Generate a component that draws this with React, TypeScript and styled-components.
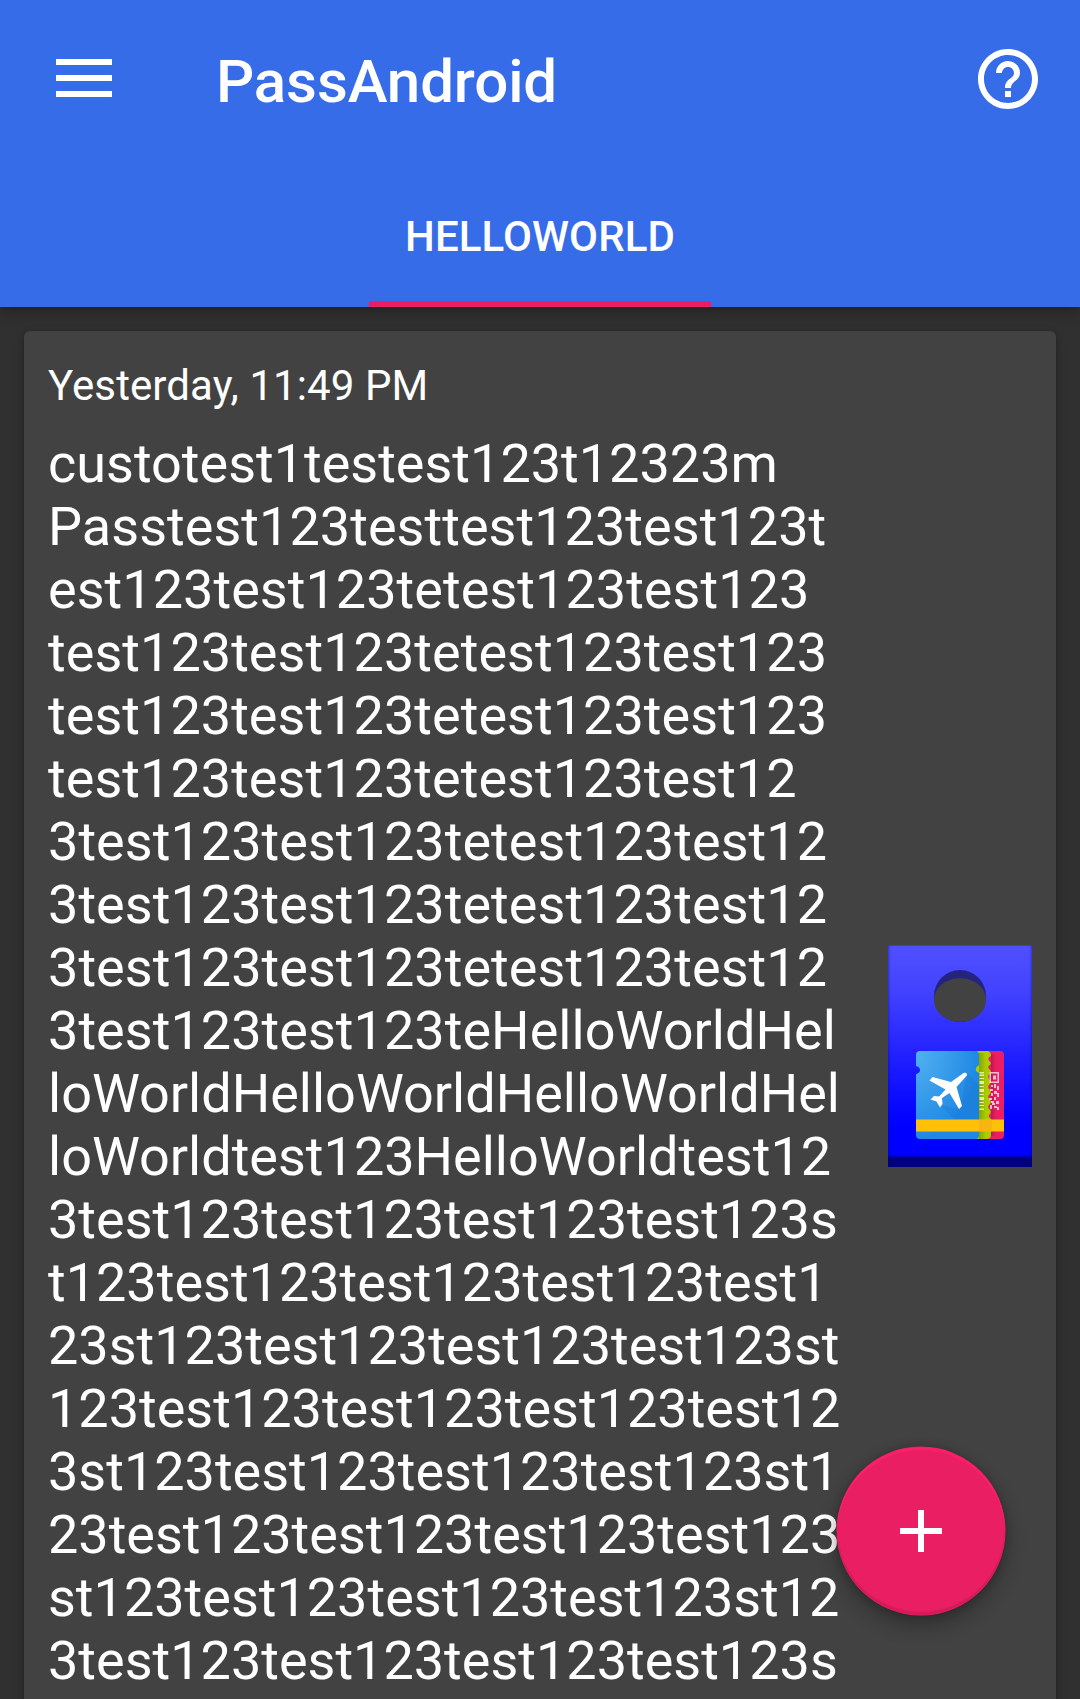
import React from "react";
import styled, { createGlobalStyle } from "styled-components";

const GlobalStyle = createGlobalStyle`
  * { box-sizing: border-box; }
  html, body { margin: 0; background: #303030; }
  body {
    font-family: Roboto, "Noto Sans", sans-serif;
    color: #fff;
    overflow: hidden;
  }
`;

const Screen = styled.div`
  width: 1080px;
  height: 1699px;
  overflow: hidden;
  display: flex;
  flex-direction: column;
  background: #303030;
`;

const AppBar = styled.header`
  flex: none;
  height: 307px;
  background: #366ce8;
  display: flex;
  flex-direction: column;
  z-index: 1;
  box-shadow: 0 4px 14px rgba(0, 0, 0, 0.3), 0 0 3px rgba(0, 0, 0, 0.25);
`;

const Toolbar = styled.div`
  height: 157px;
  padding: 0 36px 0 48px;
  display: flex;
  align-items: center;
`;

const IconButton = styled.button`
  width: 72px;
  height: 72px;
  padding: 0;
  border: 0;
  background: none;
  color: #fff;
  display: flex;
`;

const AppTitle = styled.h1`
  flex: 1;
  margin: 6px 0 0 96px;
  font-size: 60px;
  line-height: 71px;
  font-weight: 500;
  letter-spacing: -0.1px;
`;

const Tabs = styled.nav`
  flex: 1;
  display: flex;
  justify-content: center;
`;

const Tab = styled.div`
  width: 342px;
  padding-top: 15px;
  border-bottom: 6px solid #e91e63;
  display: flex;
  align-items: center;
  justify-content: center;
  font-size: 42px;
  line-height: 50px;
  font-weight: 500;
  letter-spacing: 0.1px;
`;

const Card = styled.article`
  flex: none;
  height: 1500px;
  margin: 24px 24px 0;
  padding: 24px;
  border-radius: 6px;
  background: #424242;
  box-shadow: 0 3px 8px rgba(0, 0, 0, 0.3), 0 0 2px rgba(0, 0, 0, 0.15);
  display: flex;
  justify-content: space-between;
`;

const Details = styled.div`
  width: 800px;
`;

const PassDate = styled.div`
  height: 64px;
  margin-top: 6px;
  font-size: 42px;
  line-height: 50px;
  letter-spacing: 0.1px;
`;

const PassTitle = styled.div`
  margin-top: 7px;
  font-size: 54px;
  line-height: 63px;
  white-space: nowrap;
`;

const Line = styled.div<{ $tracking: number }>`
  height: 63px;
  letter-spacing: ${(p) => p.$tracking}px;
`;

const PassArt = styled.svg`
  flex: none;
  width: 144px;
  height: 222px;
  margin-top: 590px;
`;

const Fab = styled.button`
  position: absolute;
  left: 837px;
  top: 1447px;
  width: 168px;
  height: 168px;
  padding: 0;
  border: 0;
  border-radius: 50%;
  z-index: 2;
  color: #fff;
  background: #e91e63;
  display: flex;
  align-items: center;
  justify-content: center;
  box-shadow: inset 0 3px 1px #fc206b, inset 0 -3px 1px #d41b5a,
    0 0 0 0.5px #e91e63, 0 10px 20px rgba(0, 0, 0, 0.3),
    0 0 8px rgba(0, 0, 0, 0.2);
`;

const lines = [
  "custotest1testest123t12323m",
  "Passtest123testtest123test123t",
  "est123test123tetest123test123",
  "test123test123tetest123test123",
  "test123test123tetest123test123",
  "test123test123tetest123test12",
  "3test123test123tetest123test12",
  "3test123test123tetest123test12",
  "3test123test123tetest123test12",
  "3test123test123teHelloWorldHel",
  "loWorldHelloWorldHelloWorldHel",
  "loWorldtest123HelloWorldtest12",
  "3test123test123test123test123s",
  "t123test123test123test123test1",
  "23st123test123test123test123st",
  "123test123test123test123test12",
  "3st123test123test123test123st1",
  "23test123test123test123test123",
  "st123test123test123test123st12",
  "3test123test123test123test123s",
];

function Icon({ d }: { d: string }) {
  return (
    <svg width="72" height="72" viewBox="0 0 24 24" fill="currentColor">
      <path d={d} />
    </svg>
  );
}

function MenuIcon() {
  return (
    <svg width="72" height="72" viewBox="0 0 72 72" fill="currentColor">
      <path d="M8 16h56v6H8zM8 32h56v6H8zM8 48h56v6H8z" />
    </svg>
  );
}

function Pass() {
  return (
    <PassArt viewBox="0 0 144 222">
      <defs>
        <linearGradient id="body" x1="0" y1="0" x2="0" y2="1">
          <stop offset="0" stopColor="#5050ff" />
          <stop offset="0.2" stopColor="#4343ff" />
          <stop offset="0.72" stopColor="#0808ff" />
          <stop offset="0.82" stopColor="#0000ff" />
        </linearGradient>
        <linearGradient id="edge" x1="0" y1="0" x2="1" y2="0">
          <stop offset="0" stopColor="#000080" stopOpacity="0.3" />
          <stop offset="0.02" stopColor="#000080" stopOpacity="0" />
          <stop offset="0.98" stopColor="#000080" stopOpacity="0" />
          <stop offset="1" stopColor="#000080" stopOpacity="0.3" />
        </linearGradient>
        <radialGradient id="sky" cx="0" cy="0" r="1">
          <stop offset="0" stopColor="#52b2f0" />
          <stop offset="1" stopColor="#1f88e5" />
        </radialGradient>
        <linearGradient id="shade" x1="0" y1="0" x2="1" y2="0">
          <stop offset="0" stopColor="#000" stopOpacity="0.2" />
          <stop offset="1" stopColor="#000" stopOpacity="0" />
        </linearGradient>
      </defs>
      <rect width="144" height="222" fill="url(#body)" />
      <rect width="144" height="222" fill="url(#edge)" />
      <rect width="144" height="1" fill="#000080" opacity="0.25" />
      <rect y="210.5" width="144" height="1.5" fill="#0000c0" />
      <rect y="212" width="144" height="10" fill="#000080" />
      <circle cx="72" cy="51" r="26" fill="#24247f" />
      <ellipse cx="72" cy="55" rx="26" ry="22" fill="#424242" />

      <path d="M98 106H112.500Q116 106 116 110V190Q116 194 112.500 194H98Z" fill="#e91e63" />
      <path
        d="M86 106H100Q103 107 103 111Q99 113 101 116Q104 117 102 120Q99 121 101 124Q104 126 102 129Q99 131 101 134Q104 136 102 139Q99 141 101 144Q104 146 102 149Q99 151 101 154Q104 156 102 159Q99 161 101 164Q104 166 102 169Q99 171 103 174V191Q102 194 99 194H86Z"
        fill="#aacd00"
      />
      <rect x="103" y="109" width="5" height="82" fill="url(#shade)" />
      <rect x="91" y="108" width="7" height="86" fill="url(#shade)" />
      <path
        d="M32 106H89Q91 107 91 110V120Q87 122 88 126L91 128V190Q91 194 88 194H32Q28 194 28 190V129Q32 128 32 125Q32 122 28 121V110Q28 106 32 106Z"
        fill="url(#sky)"
      />
      <path d="M79 128L91 140V174H66L52 160L72 164Z" fill="#0b5eae" opacity="0.14" />
      <path
        d="M75.500 128C78 127 80 129 78.500 131L68.500 142L74 161L71 164L61.500 148L54 153L54.500 159L52 162.500L48.500 156.500L42.500 154.500L46 151L51 151.500L57.500 144.500L41.500 135.500L44.500 132L63 137Z"
        fill="#fff"
      />
      <g fill="#f2ffc6" opacity="0.8">
        <path d="M91.500 127H96V128.500H91.500zM91.500 129.500H96V131H91.500zM91.500 133H96V134H91.500zM91.500 136H96V139H91.500zM91.500 141H96V142H91.500zM91.500 144H96V147H91.500zM91.500 149H96V150H91.500zM91.500 152H96V155H91.500zM91.500 157H96V158H91.500zM91.500 160H96V161H91.500zM91.500 163.500H96V165H91.500z" />
      </g>
      <g fill="#ffd7e5" opacity="0.85">
        <path fillRule="evenodd" d="M101.500 127H111V138H101.500zM103 128.500V136.500H109.500V128.500z" />
        <path d="M105 130.500H108V134.500H105zM103 140H105V142H103zM106 139H108V143H106zM109 141H111V145H109zM102 144H105V146H102zM106 146H109V149H106zM109 148H111V152H109zM103 148H105V151H103zM106 152H108V155H106zM101 153H104V155H101zM103 156H106V158H103zM108 156H111V159H108zM102 160H104V164H102zM106 161H109V163H106zM109 162H111V165H109zM104 158H107V160H104z" />
      </g>
      <rect x="28" y="174.500" width="88" height="12" fill="#ffc107" />
      <rect x="91" y="174.500" width="13" height="12" fill="#f1a817" opacity="0.5" />
    </PassArt>
  );
}

export default function App() {
  return (
    <Screen>
      <GlobalStyle />
      <AppBar>
        <Toolbar>
          <IconButton aria-label="Menu">
            <MenuIcon />
          </IconButton>
          <AppTitle>PassAndroid</AppTitle>
          <IconButton aria-label="Help">
            <Icon d="M11 18h2v-2h-2v2zm1-16C6.480 2 2 6.480 2 12s4.480 10 10 10 10-4.480 10-10S17.520 2 12 2zm0 18c-4.410 0-8-3.590-8-8s3.590-8 8-8 8 3.590 8 8-3.590 8-8 8zm0-14c-2.210 0-4 1.790-4 4h2c0-1.100.900-2 2-2s2 .900 2 2c0 2-3 1.750-3 5h2c0-2.250 3-2.500 3-5 0-2.210-1.790-4-4-4z" />
          </IconButton>
        </Toolbar>
        <Tabs>
          <Tab>HELLOWORLD</Tab>
        </Tabs>
      </AppBar>
      <Card>
        <Details>
          <PassDate>Yesterday, 11:49 PM</PassDate>
          <PassTitle>
            {lines.map((line, i) => (
              <Line key={i} $tracking={i > 0 && i < 10 ? 0.04 : 0}>
                {line}
              </Line>
            ))}
          </PassTitle>
        </Details>
        <Pass />
      </Card>
      <Fab aria-label="Add pass">
        <Icon d="M19 13h-6v6h-2v-6H5v-2h6V5h2v6h6v2z" />
      </Fab>
    </Screen>
  );
}
